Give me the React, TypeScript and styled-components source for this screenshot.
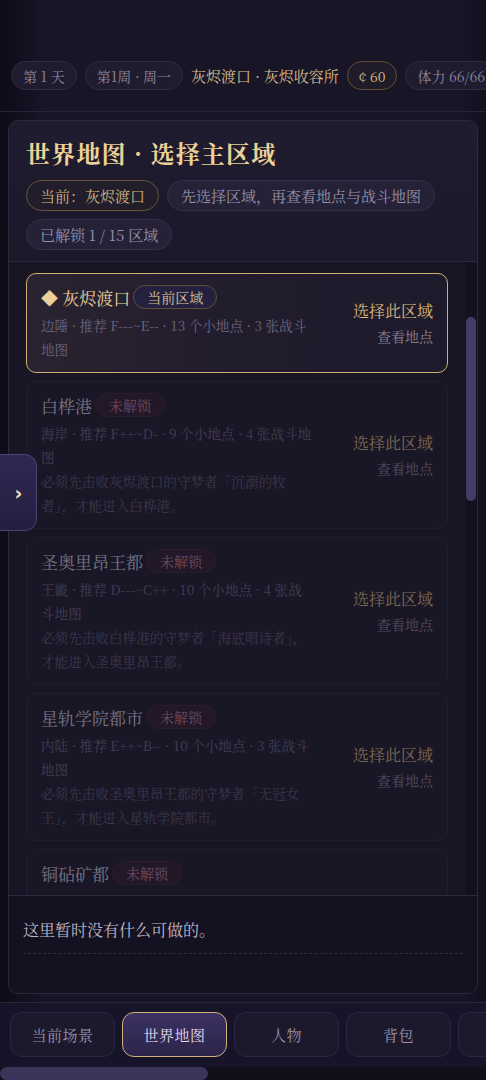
import React from "react";
import styled, { createGlobalStyle, css } from "styled-components";

const GlobalStyle = createGlobalStyle`
  * { box-sizing: border-box; }
  html, body { margin: 0; padding: 0; height: 100%; }
  body {
    background: #181527;
    color: #d6d0e0;
    font-family: "Noto Serif CJK SC", "Noto Serif SC", serif;
    overflow: hidden;
  }
  #root { height: 100%; }
`;

const Page = styled.div`
  position: relative;
  height: 100vh;
  display: flex;
  flex-direction: column;
  background:
    linear-gradient(90deg, rgba(4, 3, 10, 0.55) 0px, rgba(4, 3, 10, 0) 46px, rgba(4, 3, 10, 0) calc(100% - 24px), rgba(4, 3, 10, 0.3) 100%),
    #181527;
`;

const TopBar = styled.header`
  flex: none;
  height: 112px;
  display: flex;
  align-items: flex-end;
  gap: 8px;
  padding: 0 11px 21px;
  border-bottom: 1px solid #27233a;
  overflow: hidden;
  white-space: nowrap;
`;

const Pill = styled.span<{ $gold?: boolean }>`
  flex: none;
  height: 29px;
  display: inline-flex;
  align-items: center;
  padding: 0 11px;
  border-radius: 15px;
  font-size: 14px;
  background: #1f1c30;
  border: 1px solid #2f2b43;
  color: #8e879e;
  ${(p) =>
    p.$gold &&
    css`
      border-color: #5e4e34;
      background: #1f1b28;
      color: #d8ba82;
    `}
`;

const Location = styled.span`
  flex: none;
  font-size: 15px;
  color: #d8bd8b;
  line-height: 29px;
`;

const Main = styled.main`
  flex: 1;
  min-height: 0;
  padding: 8px;
  display: flex;
`;

const Panel = styled.section`
  flex: 1;
  display: flex;
  flex-direction: column;
  border: 1px solid #2c283e;
  border-radius: 10px;
  background: #1c192c;
  overflow: hidden;
`;

const PanelHead = styled.div`
  flex: none;
  padding: 18px 17px 11px;
  border-bottom: 1px solid #2b273d;
  background: linear-gradient(180deg, #1f1c30 0%, #1b182a 100%);
`;

const Title = styled.h1`
  margin: 0;
  font-size: 24px;
  line-height: 28px;
  font-weight: 700;
  color: #edd196;
  letter-spacing: 1.2px;
`;

const ChipRow = styled.div`
  margin-top: 13px;
  display: flex;
  flex-wrap: wrap;
  gap: 8px;
`;

const Chip = styled.span<{ $gold?: boolean }>`
  height: 31px;
  display: inline-flex;
  align-items: center;
  padding: 0 13px;
  border-radius: 16px;
  font-size: 15px;
  background: #252238;
  border: 1px solid #343049;
  color: #9891a9;
  ${(p) =>
    p.$gold &&
    css`
      background: #221d2b;
      border-color: #66553a;
      color: #d3b47d;
    `}
`;

const ListArea = styled.div`
  flex: 1;
  min-height: 0;
  display: flex;
  background: #181525;
`;

const RegionList = styled.div`
  flex: 1;
  min-width: 0;
  overflow: hidden;
  padding: 11px 17px;
  display: flex;
  flex-direction: column;
  gap: 8px;
`;

const ScrollRail = styled.div`
  flex: none;
  width: 12px;
  padding: 55px 1px 0;
  background: #13111d;
`;

const ScrollThumb = styled.div`
  height: 184px;
  border-radius: 6px;
  background: #433d66;
`;

const Card = styled.article<{ $active?: boolean; $locked?: boolean }>`
  flex: none;
  display: grid;
  grid-template-columns: 1fr auto;
  column-gap: 39px;
  align-items: center;
  padding: 11px 14px 11px 14px;
  border-radius: 10px;
  border: 1px solid #2a2639;
  background: #1b1828;
  ${(p) =>
    p.$active &&
    css`
      border-color: #cfae70;
      background: linear-gradient(100deg, #2a2331 0%, #221d2d 45%, #1d1a2b 100%);
    `}
  ${(p) =>
    p.$locked &&
    css`
      opacity: 0.5;
    `}
`;

const CardBody = styled.div`
  min-width: 0;
`;

const CardTitleRow = styled.div`
  display: flex;
  align-items: center;
  gap: 3px;
  height: 24px;
  margin-bottom: 4px;
`;

const CardName = styled.span<{ $active?: boolean }>`
  font-size: 17px;
  color: ${(p) => (p.$active ? "#ead09a" : "#d4cede")};
`;

const Badge = styled.span<{ $current?: boolean }>`
  height: 24px;
  display: inline-flex;
  align-items: center;
  padding: 0 13px;
  border-radius: 12px;
  font-size: 14px;
  ${(p) =>
    p.$current
      ? css`
          background: #23213f;
          border: 1px solid #5c4e3a;
          color: #dcc290;
        `
      : css`
          background: #2c1b2b;
          border: 1px solid #3f2335;
          color: #c47f9f;
        `}
`;

const Meta = styled.p`
  margin: 0;
  font-size: 13.6px;
  line-height: 24px;
  color: #6c6580;
`;

const Reason = styled(Meta)`
  color: #5f5870;
`;

const CardActions = styled.div`
  display: flex;
  flex-direction: column;
  align-items: flex-end;
  gap: 3px;
`;

const SelectLink = styled.span`
  font-size: 16px;
  line-height: 22px;
  color: #dab979;
`;

const ViewLink = styled.span`
  font-size: 14px;
  line-height: 22px;
  color: #898198;
`;

const PanelFoot = styled.div`
  flex: none;
  height: 98px;
  padding: 22px 14px 0;
  border-top: 1px solid #2d293e;
  background: #141220;
`;

const Notice = styled.p`
  margin: 0;
  padding-bottom: 11px;
  font-size: 16px;
  line-height: 24px;
  color: #bfb8ca;
  border-bottom: 1px dashed #2f2b40;
`;

const NavArea = styled.div`
  flex: none;
  display: flex;
  flex-direction: column;
  border-top: 1px solid #2a2639;
  background: #17142a;
`;

const NavBar = styled.nav`
  display: flex;
  gap: 7px;
  padding: 9px 10px 10px;
  overflow: hidden;
`;

const NavRail = styled.div`
  height: 13px;
  background: #110f1a;
`;

const NavThumb = styled.div`
  width: 208px;
  height: 100%;
  border-radius: 7px;
  background: #3c355b;
`;

const NavButton = styled.button<{ $active?: boolean }>`
  flex: none;
  width: 105px;
  height: 45px;
  border-radius: 12px;
  font-family: inherit;
  font-size: 15px;
  letter-spacing: 0.5px;
  cursor: pointer;
  border: 1px solid #2b2740;
  background: #1c192d;
  color: #9a93aa;
  ${(p) =>
    p.$active &&
    css`
      border-color: #d2b27a;
      background: linear-gradient(180deg, #3c3163 0%, #2b2449 100%);
      color: #e2d9ee;
    `}
`;

const SideTab = styled.button`
  position: absolute;
  left: -12px;
  top: 454px;
  width: 49px;
  height: 77px;
  padding: 0 0 0 12px;
  border-radius: 12px;
  border: 1px solid #4b4372;
  background: linear-gradient(180deg, #2f2853 0%, #241f40 100%);
  color: #f3dfb8;
  font-family: "DejaVu Sans", sans-serif;
  font-size: 19px;
  font-weight: 700;
  display: flex;
  align-items: center;
  justify-content: center;
  cursor: pointer;
`;

type Region = {
  name: string;
  meta: string;
  reason?: string;
  current?: boolean;
};

const regions: Region[] = [
  { name: "◆ 灰烬渡口", meta: "边陲 · 推荐 F---~E-- · 13 个小地点 · 3 张战斗地图", current: true },
  {
    name: "白桦港",
    meta: "海岸 · 推荐 F++~D- · 9 个小地点 · 4 张战斗地图",
    reason: "必须先击败灰烬渡口的守梦者「沉溺的牧者」，才能进入白桦港。",
  },
  {
    name: "圣奥里昂王都",
    meta: "王畿 · 推荐 D---~C++ · 10 个小地点 · 4 张战斗地图",
    reason: "必须先击败白桦港的守梦者「海底唱诗者」，才能进入圣奥里昂王都。",
  },
  {
    name: "星轨学院都市",
    meta: "内陆 · 推荐 E++~B-- · 10 个小地点 · 3 张战斗地图",
    reason: "必须先击败圣奥里昂王都的守梦者「无冠女王」，才能进入星轨学院都市。",
  },
  {
    name: "铜砧矿都",
    meta: "山地 · 推荐 C--~B+ · 11 个小地点 · 4 张战斗地图",
    reason: "必须先击败星轨学院都市的守梦者「星图观测者」，才能进入铜砧矿都。",
  },
  {
    name: "雾沼林地",
    meta: "湿地 · 推荐 C~B · 9 个小地点 · 3 张战斗地图",
    reason: "必须先击败铜砧矿都的守梦者「熔炉之心」，才能进入雾沼林地。",
  },
];

const navItems = ["当前场景", "世界地图", "人物", "背包", "任务", "技能", "图鉴", "商店", "日志", "设置"];

export default function App() {
  return (
    <>
      <GlobalStyle />
      <Page>
        <TopBar>
          <Pill>第 1 天</Pill>
          <Pill>第1周 · 周一</Pill>
          <Location>灰烬渡口 · 灰烬收容所</Location>
          <Pill $gold>¢ 60</Pill>
          <Pill>体力 66/66</Pill>
          <Pill>精神 40/40</Pill>
        </TopBar>
        <Main>
          <Panel>
            <PanelHead>
              <Title>世界地图 · 选择主区域</Title>
              <ChipRow>
                <Chip $gold>当前：灰烬渡口</Chip>
                <Chip>先选择区域，再查看地点与战斗地图</Chip>
                <Chip>已解锁 1 / 15 区域</Chip>
              </ChipRow>
            </PanelHead>
            <ListArea>
              <RegionList>
                {regions.map((r) => (
                  <Card key={r.name} $active={r.current} $locked={!r.current}>
                    <CardBody>
                      <CardTitleRow>
                        <CardName $active={r.current}>{r.name}</CardName>
                        <Badge $current={r.current}>{r.current ? "当前区域" : "未解锁"}</Badge>
                      </CardTitleRow>
                      <Meta>{r.meta}</Meta>
                      {r.reason && <Reason>{r.reason}</Reason>}
                    </CardBody>
                    <CardActions>
                      <SelectLink>选择此区域</SelectLink>
                      <ViewLink>查看地点</ViewLink>
                    </CardActions>
                  </Card>
                ))}
              </RegionList>
              <ScrollRail>
                <ScrollThumb />
              </ScrollRail>
            </ListArea>
            <PanelFoot>
              <Notice>这里暂时没有什么可做的。</Notice>
            </PanelFoot>
          </Panel>
        </Main>
        <NavArea>
          <NavBar>
            {navItems.map((n) => (
              <NavButton key={n} $active={n === "世界地图"}>
                {n}
              </NavButton>
            ))}
          </NavBar>
          <NavRail>
            <NavThumb />
          </NavRail>
        </NavArea>
        <SideTab aria-label="展开侧栏">›</SideTab>
      </Page>
    </>
  );
}
